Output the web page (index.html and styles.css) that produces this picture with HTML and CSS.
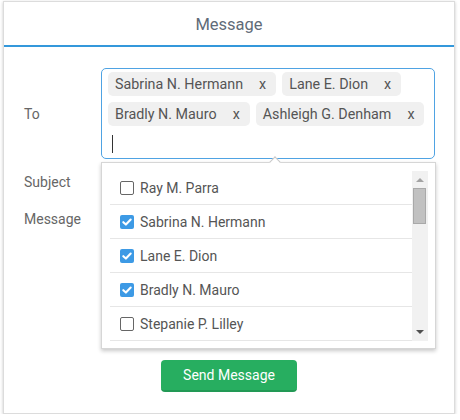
FILE: index.html
```html
<!DOCTYPE html>
<html>
<head>
<meta charset="utf-8">
<link rel="stylesheet" href="styles.css">
</head>
<body>
<div class="card">
  <div class="header">Message</div>
  <div class="form">
    <div class="label label-center">To</div>
    <div class="field-wrap">
      <div class="tag-input">
        <div class="tags">
          <span class="tag">Sabrina N. Hermann<span class="x">x</span></span>
          <span class="tag">Lane E. Dion<span class="x">x</span></span>
          <span class="tag">Bradly N. Mauro<span class="x">x</span></span>
          <span class="tag">Ashleigh G. Denham<span class="x">x</span></span>
        </div>
        <div class="type-line"><span class="caret"></span></div>
      </div>
      <div class="dropdown">
        <span class="pointer"></span>
        <div class="list-area">
          <ul class="list">
            <li class="item"><span class="cb"></span>Ray M. Parra</li>
            <li class="item"><span class="cb checked"><svg viewBox="0 0 14 14" width="14" height="14"><polyline points="3.3,7.2 5.9,9.6 10.7,4.6" fill="none" stroke="#fff" stroke-width="2.1" stroke-linecap="round" stroke-linejoin="round"/></svg></span>Sabrina N. Hermann</li>
            <li class="item"><span class="cb checked"><svg viewBox="0 0 14 14" width="14" height="14"><polyline points="3.3,7.2 5.9,9.6 10.7,4.6" fill="none" stroke="#fff" stroke-width="2.1" stroke-linecap="round" stroke-linejoin="round"/></svg></span>Lane E. Dion</li>
            <li class="item"><span class="cb checked"><svg viewBox="0 0 14 14" width="14" height="14"><polyline points="3.3,7.2 5.9,9.6 10.7,4.6" fill="none" stroke="#fff" stroke-width="2.1" stroke-linecap="round" stroke-linejoin="round"/></svg></span>Bradly N. Mauro</li>
            <li class="item"><span class="cb"></span>Stepanie P. Lilley</li>
          </ul>
          <div class="scrollbar">
            <span class="arrow-up"></span>
            <span class="thumb"></span>
            <span class="arrow-down"></span>
          </div>
        </div>
      </div>
    </div>

    <div class="label label-center">Subject</div>
    <input class="subject" type="text">

    <div class="label label-top">Message</div>
    <textarea class="message"></textarea>
  </div>
  <button class="send">Send Message</button>
</div>
</body>
</html>
```

FILE: styles.css
```css
* { box-sizing: border-box; }

html, body {
  margin: 0;
  padding: 0;
  background: #fff;
  font-family: Roboto, "Noto Sans", "DejaVu Sans", sans-serif;
}

.card {
  margin: 1px 0 0 3px;
  width: 452px;
  border: 1px solid #dcdcdc;
  background: #fff;
  box-shadow: 0 1px 3px rgba(0, 0, 0, 0.22);
  padding-bottom: 21px;
}

.header {
  height: 45px;
  line-height: 43px;
  padding-top: 1px;
  text-align: center;
  font-size: 16.5px;
  color: #5f6b78;
  border-bottom: 2px solid #3498db;
}

.form {
  display: grid;
  grid-template-columns: 77px 334px;
  row-gap: 6px;
  padding: 21px 19px 0 20px;
}

.label {
  font-size: 14px;
  color: #666;
  line-height: 20px;
}
.label-center { align-self: center; }
.label-top { align-self: start; padding-top: 4px; }

.field-wrap {
  position: relative;
}

.tag-input {
  border: 1px solid #4fa3e3;
  border-radius: 5px;
  padding: 3px 4px 2px 6px;
  height: 91px;
}

.tags {
  display: flex;
  flex-wrap: wrap;
  gap: 6px;
}

.tag {
  display: inline-flex;
  align-items: center;
  height: 24px;
  padding: 0 10px 0 7px;
  background: #f0f0f0;
  border-radius: 5px;
  font-size: 14.3px;
  color: #555;
  white-space: nowrap;
}

.tag .x {
  margin-left: 16px;
  color: #555;
}

.type-line {
  height: 24px;
  margin-top: 6px;
  display: flex;
  align-items: center;
  padding-left: 4px;
}

.caret {
  width: 1px;
  height: 18px;
  background: #333;
}

.subject {
  height: 34px;
  border: 1px solid #ccc;
  border-radius: 4px;
  font: inherit;
}

.message {
  height: 140px;
  border: 1px solid #ccc;
  border-radius: 4px;
  resize: none;
  font: inherit;
}

.dropdown {
  position: absolute;
  top: calc(100% + 3px);
  left: 0;
  width: 335px;
  z-index: 5;
  background: #fff;
  border: 1px solid #d6d6d6;
  box-shadow: 0 2px 4px rgba(0, 0, 0, 0.22);
  padding: 8px 7px 7px 8px;
}

.pointer {
  position: absolute;
  top: -5px;
  left: 169px;
  width: 8px;
  height: 8px;
  background: #fff;
  border-top: 1px solid #c8c8c8;
  border-left: 1px solid #c8c8c8;
  transform: rotate(45deg);
}

.list-area {
  display: flex;
  height: 170px;
  overflow: hidden;
}

.list {
  list-style: none;
  margin: 0;
  padding: 0;
  width: 302px;
}

.item {
  display: flex;
  align-items: center;
  height: 34px;
  border-bottom: 1px solid #e6e6e6;
  padding-left: 10px;
  font-size: 14px;
  color: #555;
}

.cb {
  width: 14px;
  height: 14px;
  margin-right: 6px;
  border: 1.5px solid #666;
  border-radius: 2px;
  background: #fff;
  flex: none;
  display: flex;
}

.cb.checked {
  border: none;
  background: #3d9ae5;
}

.scrollbar {
  position: relative;
  width: 16px;
  height: 170px;
  background: #f1f1f1;
  flex: none;
}

.arrow-up {
  position: absolute;
  top: 7px;
  left: 4px;
  width: 0;
  height: 0;
  border-left: 4px solid transparent;
  border-right: 4px solid transparent;
  border-bottom: 4px solid #a3a3a3;
}

.arrow-down {
  position: absolute;
  bottom: 7px;
  left: 4px;
  width: 0;
  height: 0;
  border-left: 4px solid transparent;
  border-right: 4px solid transparent;
  border-top: 4px solid #505050;
}

.thumb {
  position: absolute;
  top: 17px;
  left: 1px;
  width: 13px;
  height: 36px;
  background: #c1c1c1;
  border: 1px solid #a9a9a9;
}

.send {
  display: block;
  margin: 15px auto 0;
  width: 136px;
  height: 32px;
  background: #27ae60;
  border: none;
  border-bottom: 2px solid #229955;
  border-radius: 4px;
  color: #fff;
  font-family: Roboto, "Noto Sans", sans-serif;
  font-size: 14px;
  padding: 0;
}
```
